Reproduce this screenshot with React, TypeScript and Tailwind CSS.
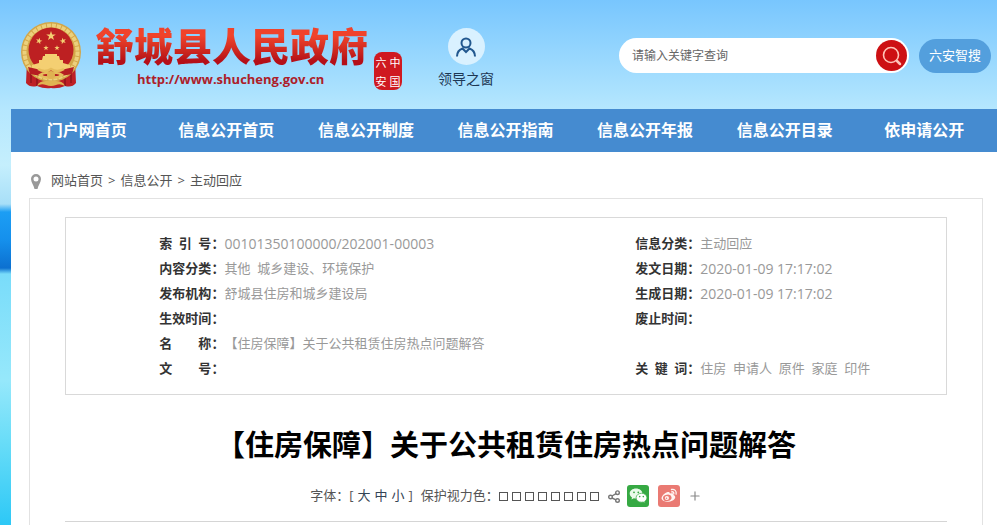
import { Plus } from 'lucide-react';

const navItems = ['门户网首页', '信息公开首页', '信息公开制度', '信息公开指南', '信息公开年报', '信息公开目录', '依申请公开'];
const crumbs = ['网站首页', '信息公开', '主动回应'];
const colon = '\uff1a';

type Field = { label: string; value: string; numeric?: boolean };
const rows: [Field, Field | null][] = [
  [{ label: '索\u2002引\u2002号', value: '00101350100000/202001-00003', numeric: true }, { label: '信息分类', value: '主动回应' }],
  [{ label: '内容分类', value: '其他\u00a0 城乡建设、环境保护' }, { label: '发文日期', value: '2020-01-09 17:17:02', numeric: true }],
  [{ label: '发布机构', value: '舒城县住房和城乡建设局' }, { label: '生成日期', value: '2020-01-09 17:17:02', numeric: true }],
  [{ label: '生效时间', value: '' }, { label: '废止时间', value: '' }],
  [{ label: '名\u2003\u2003称', value: '【住房保障】关于公共租赁住房热点问题解答' }, null],
  [{ label: '文\u2003\u2003号', value: '' }, { label: '关\u2002键\u2002词', value: '住房\u00a0 申请人\u00a0 原件\u00a0 家庭\u00a0 印件' }],
];

const swatches = ['米色', '白色', '粉色', '蓝色', '绿色', '黄色', '灰色', '青色'];
const star = 'M0-5 1.2-1.6 4.8-1.6 1.9.5 3 4 0 1.9-3 4-1.9.5-4.8-1.6-1.2-1.6Z';

function Emblem() {
  return (
    <svg viewBox="0 0 64 68" className="h-[68px] w-16 shrink-0" aria-hidden="true">
      <path d="M8 40 7 62q4 5 11 3 7 3 14 2 7 1 14-2 7 2 11-3l-1-22Z" fill="#be2026" />
      <path d="M12 50v12M18 53v12M46 53v12M52 50v12" stroke="#8f151c" strokeWidth="1.5" />
      <circle cx="32" cy="31" r="30" fill="#d3a648" />
      <circle cx="32" cy="31" r="26.5" fill="none" stroke="#ecd07c" strokeWidth="4" strokeDasharray="4 1" />
      <circle cx="32" cy="29" r="22.5" fill="#bd2022" />
      <g fill="#f4cf72">
        <path d={star} transform="translate(32 15)" />
        <path d={star} transform="translate(20 20) rotate(15) scale(.68)" />
        <path d={star} transform="translate(44 20) rotate(-15) scale(.68)" />
        <path d={star} transform="translate(27 27) scale(.55)" />
        <path d={star} transform="translate(38 27) scale(.55)" />
        <path d="M24 35h2v-2h12v2h2l1 4H23ZM20 39h24v3l7 2v5H13v-5l7-2Z" />
      </g>
      <path d="M9 46q23 7 46 0l-2 7q-21 5-42 0Z" fill="#b51d22" />
      <path d="M19 48q7 4 13 0 6 4 13 0M21 54q5-4 11-1 6-3 11 1-5 4-11 2-6 2-11-2Z" fill="none" stroke="#e6bd5c" strokeWidth="2.5" />
      <circle cx="32" cy="54" r="4" fill="#dfb251" />
      <path d="M18 65q2-5 9-5h10q7 0 9 5-5-3-9-1-5 2-10 0-5-2-9 1Z" fill="#e0b352" />
    </svg>
  );
}

function Seal() {
  return (
    <div className="grid h-[38px] w-7 shrink-0 grid-cols-2 place-items-center rounded-lg bg-[#cf1920] font-['Noto_Sans_CJK_SC',sans-serif] text-[11px] leading-4 text-white">
      <span>六</span>
      <span>中</span>
      <span>安</span>
      <span>国</span>
    </div>
  );
}

function FieldCells({ field, first }: { field: Field; first?: boolean }) {
  return (
    <>
      <th scope="row" className="p-0 text-right font-bold whitespace-nowrap text-[#333]">
        {field.label}
        {colon}
      </th>
      <td className={`p-0 whitespace-nowrap text-[#999] ${field.numeric ? 'text-sm leading-[25px]' : ''}`}>{field.value}</td>
    </>
  );
}

export default function App() {
  return (
    <div className="min-h-screen bg-[linear-gradient(to_bottom,#78c6fe_0px,#b5e7fe_109px,#c5effd_165px,#a8dff8_204px,#1c9ef4_212px,#1590ec_240px,#0c70d0_268px,#79dcfa_274px,#96e8fb_380px,#6addf8_440px,#2dc8f6_525px)] pl-[11px] font-['Open_Sans','Noto_Sans_CJK_SC',sans-serif] text-[13px] text-[#555]">
      <header className="flex h-[109px] items-start pr-1.5 pl-2">
        <div className="flex pt-[21px]">
          <Emblem />
          <div className="ml-3">
            <h1 className="bg-linear-to-b from-[#f0432b] from-30% to-[#b50f18] to-80% bg-clip-text text-[39px] leading-[50px] font-black text-transparent">舒城县人民政府</h1>
            <a href="#site" className="ml-[42px] block text-[13px] leading-4 font-bold text-[#ad2029]">
              http://www.shucheng.gov.cn
            </a>
          </div>
          <div className="ml-1.5 pt-[31px]">
            <Seal />
          </div>
        </div>
        <a href="#leaders" className="mt-7 ml-9 flex flex-col items-center text-sm text-[#1d3754]">
          <span className="flex size-[37px] items-center justify-center rounded-full bg-[#d9f1ff]">
            <svg viewBox="0 0 22 22" className="size-[22px]" fill="none" stroke="#22588f" strokeWidth="2" aria-hidden="true">
              <circle cx="11" cy="7" r="4.500" />
              <path d="M2 20.500q0-6 5.500-8l3.500 3.500 3.500-3.500q5.500 2 5.500 8" />
            </svg>
          </span>
          <span className="mt-1 leading-5">领导之窗</span>
        </a>
        <form className="mt-[38px] ml-auto flex items-center gap-2.5" onSubmit={(e) => e.preventDefault()}>
          <div className="flex h-[35px] w-[290px] items-center rounded-full bg-white pr-0.5 pl-[13px]">
            <input
              type="text"
              aria-label="搜索"
              placeholder="请输入关键字查询"
              className="min-w-0 flex-1 bg-transparent text-xs text-[#555] outline-none placeholder:text-[#666]"
            />
            <button type="submit" aria-label="查询" className="flex size-[31px] items-center justify-center rounded-full bg-[#cd1013]">
              <svg viewBox="0 0 20 20" className="size-5" fill="none" stroke="#ffc4b8" aria-hidden="true">
                <circle cx="9" cy="9" r="7.500" strokeWidth="1.600" />
                <path d="m15 15 3 3" strokeWidth="2.500" strokeLinecap="round" />
              </svg>
            </button>
          </div>
          <button type="button" className="h-[34px] w-[72px] rounded-full bg-[#539fdd] text-white">
            六安智搜
          </button>
        </form>
      </header>

      <nav className="grid h-[43px] grid-cols-7 items-center bg-[#458bd0] pr-[3px] pb-0.5 pl-1.5 text-center text-base font-bold text-white">
        {navItems.map((item) => (
          <a key={item} href="#nav">
            {item}
          </a>
        ))}
      </nav>

      <main className="min-h-[373px] bg-white pr-3.5 pl-[18px]">
        <div className="flex h-[46px] items-center pt-3 pl-0.5">
          <svg viewBox="0 0 10 15" className="mr-2.5 h-[15px] w-2.5" aria-hidden="true">
            <path fillRule="evenodd" d="M5 0a5 5 0 0 1 5 5c0 3.500-3 6.500-3.500 10h-3C3 11.500 0 8.500 0 5a5 5 0 0 1 5-5Zm0 2.500a2.500 2.500 0 1 0 0 5 2.500 2.500 0 0 0 0-5Z" fill="#999" />
          </svg>
          <div className="flex gap-[5px] text-[#555]">
            {crumbs.map((crumb, i) => (
              <span key={crumb} className="flex gap-[5px]">
                {i > 0 && <span>&gt;</span>}
                <a href="#crumb">{crumb}</a>
              </span>
            ))}
          </div>
        </div>

        <article className="min-h-[327px] border border-b-0 border-[#e2e2e2] px-[35px] pt-[18px]">
          <div className="border border-[#d9d9d9] pt-[13px] pb-[13px]">
            <table className="w-full table-fixed border-collapse leading-[25px]">
              <colgroup>
                <col className="w-[18%]" />
                <col className="w-[46.7%]" />
                <col className="w-[65px]" />
                <col />
              </colgroup>
              <tbody>
                {rows.map(([left, right]) => (
                  <tr key={left.label} className="h-[25px]">
                    <FieldCells field={left} />
                    {right ? <FieldCells field={right} /> : <td colSpan={2} />}
                  </tr>
                ))}
              </tbody>
            </table>
          </div>

          <h2 className="mt-7 text-center text-[29px] leading-[44px] font-bold text-black">【住房保障】关于公共租赁住房热点问题解答</h2>

          <div className="mt-4 flex h-[26px] items-center justify-center">
            <span>字体{colon}</span>
            <span className="flex gap-1">
              <span>[</span>
              <button type="button" className="text-[#345]">大</button>
              <button type="button" className="text-[#345]">中</button>
              <button type="button" className="text-[#345]">小</button>
              <span>]</span>
            </span>
            <span className="ml-2">保护视力色{colon}</span>
            <span className="flex gap-1">
              {swatches.map((name) => (
                <button key={name} type="button" aria-label={name} className="size-[9px] border border-[#555]" />
              ))}
            </span>
            <button type="button" aria-label="分享" className="ml-[9px]">
              <svg viewBox="0 0 12 13" className="h-[13px] w-3" fill="none" stroke="#777" strokeWidth="1.400" aria-hidden="true">
                <circle cx="2.500" cy="7" r="1.800" />
                <circle cx="9.500" cy="2.700" r="1.800" />
                <circle cx="9.500" cy="10.500" r="1.800" />
                <path d="m4 6 4-2.400M4 8l4 1.800" />
              </svg>
            </button>
            <button type="button" aria-label="微信" className="ml-[7px] flex size-[22px] items-center justify-center rounded-[3px] bg-[#36a943]">
              <svg viewBox="0 0 22 22" className="size-[22px]" aria-hidden="true">
                <path d="M9 3.500c-3.600 0-6.300 2.200-6.300 5 0 1.700.9 3 2.300 3.900L4.500 14.500l2.300-1.300c.8.2 1.500.3 2.300.3 3.500 0 6.300-2.200 6.300-5s-2.800-5-6.400-5Z" fill="#e9faea" />
                <path d="M14.500 8.300c-3 0-5.400 1.900-5.400 4.400s2.400 4.500 5.400 4.500c.6 0 1.200-.1 1.700-.2l2 1.100-.5-1.800c1.300-.8 2.200-2.100 2.200-3.600 0-2.500-2.400-4.400-5.400-4.400Z" fill="#fff" stroke="#36a943" strokeWidth=".7" />
                <g fill="#36a943">
                  <circle cx="7" cy="7.300" r=".9" />
                  <circle cx="11.300" cy="7.300" r=".9" />
                  <circle cx="12.700" cy="11.600" r=".8" />
                  <circle cx="16.300" cy="11.600" r=".8" />
                </g>
              </svg>
            </button>
            <button type="button" aria-label="微博" className="ml-[9px] flex size-[22px] items-center justify-center rounded-[3px] bg-[#ea7a73]">
              <svg viewBox="0 0 22 22" className="size-[22px]" aria-hidden="true">
                <path d="M9 7.200c1.600-.6 3-.3 2.900 1.400 2-.8 4-.5 3.500 1.500 3.200 1.200 1.800 4.200-.7 5.500-3.500 2-9.700 1.700-11-1.500C2.900 11.800 6 8.300 9 7.200Z" fill="#fff4f2" />
                <ellipse cx="9.300" cy="12.800" rx="4.300" ry="3.200" fill="#ea7a73" transform="rotate(-10 9.300 12.800)" />
                <circle cx="8.900" cy="13" r="2.100" fill="#fff4f2" />
                <circle cx="8.500" cy="13.300" r=".8" fill="#ea7a73" />
                <path d="M13.500 4.500c3-.7 5.300 1.500 4.600 4.600M13.700 6.800c1.500-.3 2.400.6 2.100 2" fill="none" stroke="#fff4f2" strokeWidth="1.300" strokeLinecap="round" />
              </svg>
            </button>
            <button type="button" aria-label="更多" className="ml-2 text-[#888]">
              <Plus size={14} strokeWidth={2} />
            </button>
          </div>
          <hr className="mt-3 border-[#d5d5d5]" />
        </article>
      </main>
    </div>
  );
}
